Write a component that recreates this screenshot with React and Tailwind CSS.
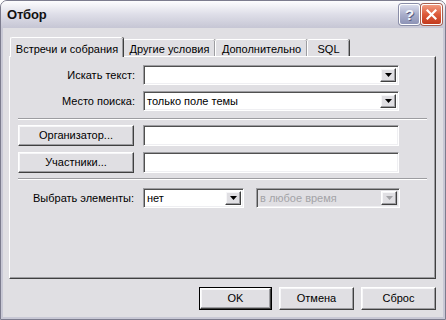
import React from "react";

const sunken =
  "border border-t-[#9d9da1] border-l-[#9d9da1] border-b-white border-r-white shadow-[inset_1px_1px_0_#505050,inset_-1px_-1px_0_#efeff2]";
const raised =
  "border border-t-white border-l-white border-b-[#404040] border-r-[#404040] shadow-[inset_-1px_-1px_0_#9d9da1,inset_1px_1px_0_#f6f6f8]";

const Arrow = ({ disabled }) => (
  <div className={`flex h-full w-[16px] items-center justify-center bg-[#e0dfe3] ${raised}`}>
    <svg width="7" height="4" viewBox="0 0 7 4">
      <path d="M0 0h7L3.5 4z" fill={disabled ? "#a2a2a6" : "#000"} />
    </svg>
  </div>
);

const Combo = ({ value, width, disabled }) => (
  <div
    className={`flex h-[20px] items-stretch p-[2px] ${sunken} ${
      disabled ? "bg-[#e0dfe3] text-[#a3a3a7]" : "bg-white"
    }`}
    style={{ width }}
  >
    <div className="flex flex-1 items-center pl-[1px] leading-none">{value}</div>
    <Arrow disabled={disabled} />
  </div>
);

const Field = () => <div className={`h-[21px] w-[256px] bg-white ${sunken}`} />;

const Button = ({ children, width, isDefault }) => (
  <div
    className={`flex items-center justify-center ${isDefault ? "border border-black" : ""}`}
    style={{ width }}
  >
    <div className={`flex h-full w-full items-center justify-center bg-[#e0dfe3] ${raised}`}>
      {children}
    </div>
  </div>
);

const Separator = () => (
  <div className="ml-[8px] w-[409px]">
    <div className="h-px bg-[#9d9da1]" />
    <div className="h-px bg-white" />
  </div>
);

const tabs = [
  { label: "Встречи и собрания", w: "w-[113px]", active: true },
  { label: "Другие условия", w: "w-[92px]" },
  { label: "Дополнительно", w: "w-[92px]" },
  { label: "SQL", w: "w-[42px]" },
];

export default function App() {
  return (
    <div className="h-[320px] w-[446px] overflow-hidden rounded-t-[7px] border border-[#7c7c8e] bg-[#e0dfe3] font-['Liberation_Sans',Arial,sans-serif] text-[11px] text-black">
      {/* Title bar */}
      <div className="flex h-[27px] items-center justify-between bg-gradient-to-b from-[#fdfdfe] via-[#dedee8] to-[#c6c6d4] pl-[6px] pr-[3px]">
        <span className="text-[13px] font-bold tracking-[-0.2px] text-[#111]">Отбор</span>
        <div className="flex gap-[1px]">
          <div className="flex h-[21px] w-[21px] items-center justify-center rounded-[3px] border border-white bg-gradient-to-b from-[#d9dcec] via-[#a9aecb] to-[#8d93b6] shadow-[0_0_0_1px_#8a8ea8]">
            <span className="text-[15px] font-bold leading-none text-[#f4f5fa] [text-shadow:1px_1px_0_#5a5f83]">?</span>
          </div>
          <div className="flex h-[21px] w-[21px] items-center justify-center rounded-[3px] border border-white bg-gradient-to-b from-[#f19a80] via-[#dc5a3a] to-[#c33a1e] shadow-[0_0_0_1px_#a86050]">
            <svg width="11" height="11" viewBox="0 0 11 11">
              <path d="M1.5 1.5l8 8M9.5 1.5l-8 8" stroke="#fff" strokeWidth="2.2" strokeLinecap="square" />
            </svg>
          </div>
        </div>
      </div>

      {/* Client area inside frame */}
      <div className="flex h-[291px] flex-col border-x-[2px] border-b-[2px] border-[#c8c8d5] pl-[6px] pr-[7px] pt-[9px]">
        {/* Tabs */}
        <div className="flex h-[19px] items-end pl-[1px]">
          {tabs.map((t) =>
            t.active ? (
              <div
                key={t.label}
                className={`relative z-10 -mb-[1px] flex h-[20px] ${t.w} items-start justify-center rounded-t-[2px] border-l border-t border-white bg-[#e0dfe3] pt-[3px] shadow-[1px_0_0_#404040,inset_-1px_0_0_#9d9da1]`}
              >
                {t.label}
              </div>
            ) : (
              <div
                key={t.label}
                className={`flex h-[17px] ${t.w} items-start justify-center rounded-t-[2px] border-l border-t border-white pt-[1px] shadow-[1px_0_0_#404040,inset_-1px_0_0_#9d9da1]`}
              >
                {t.label}
              </div>
            )
          )}
        </div>

        {/* Panel */}
        <div className="flex h-[223px] w-[427px] flex-col border border-t-white border-l-white border-b-[#404040] border-r-[#404040] pt-[8px] shadow-[inset_-1px_-1px_0_#9d9da1]">
          <div className="flex flex-col gap-[6px]">
            <div className="flex items-center">
              <div className="w-[126px] pr-[1px] text-right">Искать текст:</div>
              <div className="ml-[7px]">
                <Combo value="" width="256px" />
              </div>
            </div>
            <div className="flex items-center">
              <div className="w-[126px] pr-[1px] text-right">Место поиска:</div>
              <div className="ml-[7px]">
                <Combo value="только поле темы" width="256px" />
              </div>
            </div>
          </div>

          <div className="mt-[7px]">
            <Separator />
          </div>

          <div className="mt-[5px] flex flex-col gap-[6px] pl-[8px]">
            <div className="flex h-[21px] items-stretch">
              <Button width="116px">Организатор...</Button>
              <div className="ml-[9px]">
                <Field />
              </div>
            </div>
            <div className="flex h-[21px] items-stretch">
              <Button width="116px">Участники...</Button>
              <div className="ml-[9px]">
                <Field />
              </div>
            </div>
          </div>

          <div className="mt-[5px]">
            <Separator />
          </div>

          <div className="mt-[8px] flex items-center">
            <div className="w-[124px] text-right">Выбрать элементы:</div>
            <div className="ml-[9px]">
              <Combo value="нет" width="101px" />
            </div>
            <div className="ml-[12px]">
              <Combo value="в любое время" width="144px" disabled />
            </div>
          </div>
        </div>

        {/* Dialog buttons */}
        <div className="mt-[8px] flex h-[23px] justify-end gap-[7px]">
          <Button width="73px" isDefault>
            OK
          </Button>
          <Button width="75px">Отмена</Button>
          <Button width="75px">Сброс</Button>
        </div>
      </div>
    </div>
  );
}
